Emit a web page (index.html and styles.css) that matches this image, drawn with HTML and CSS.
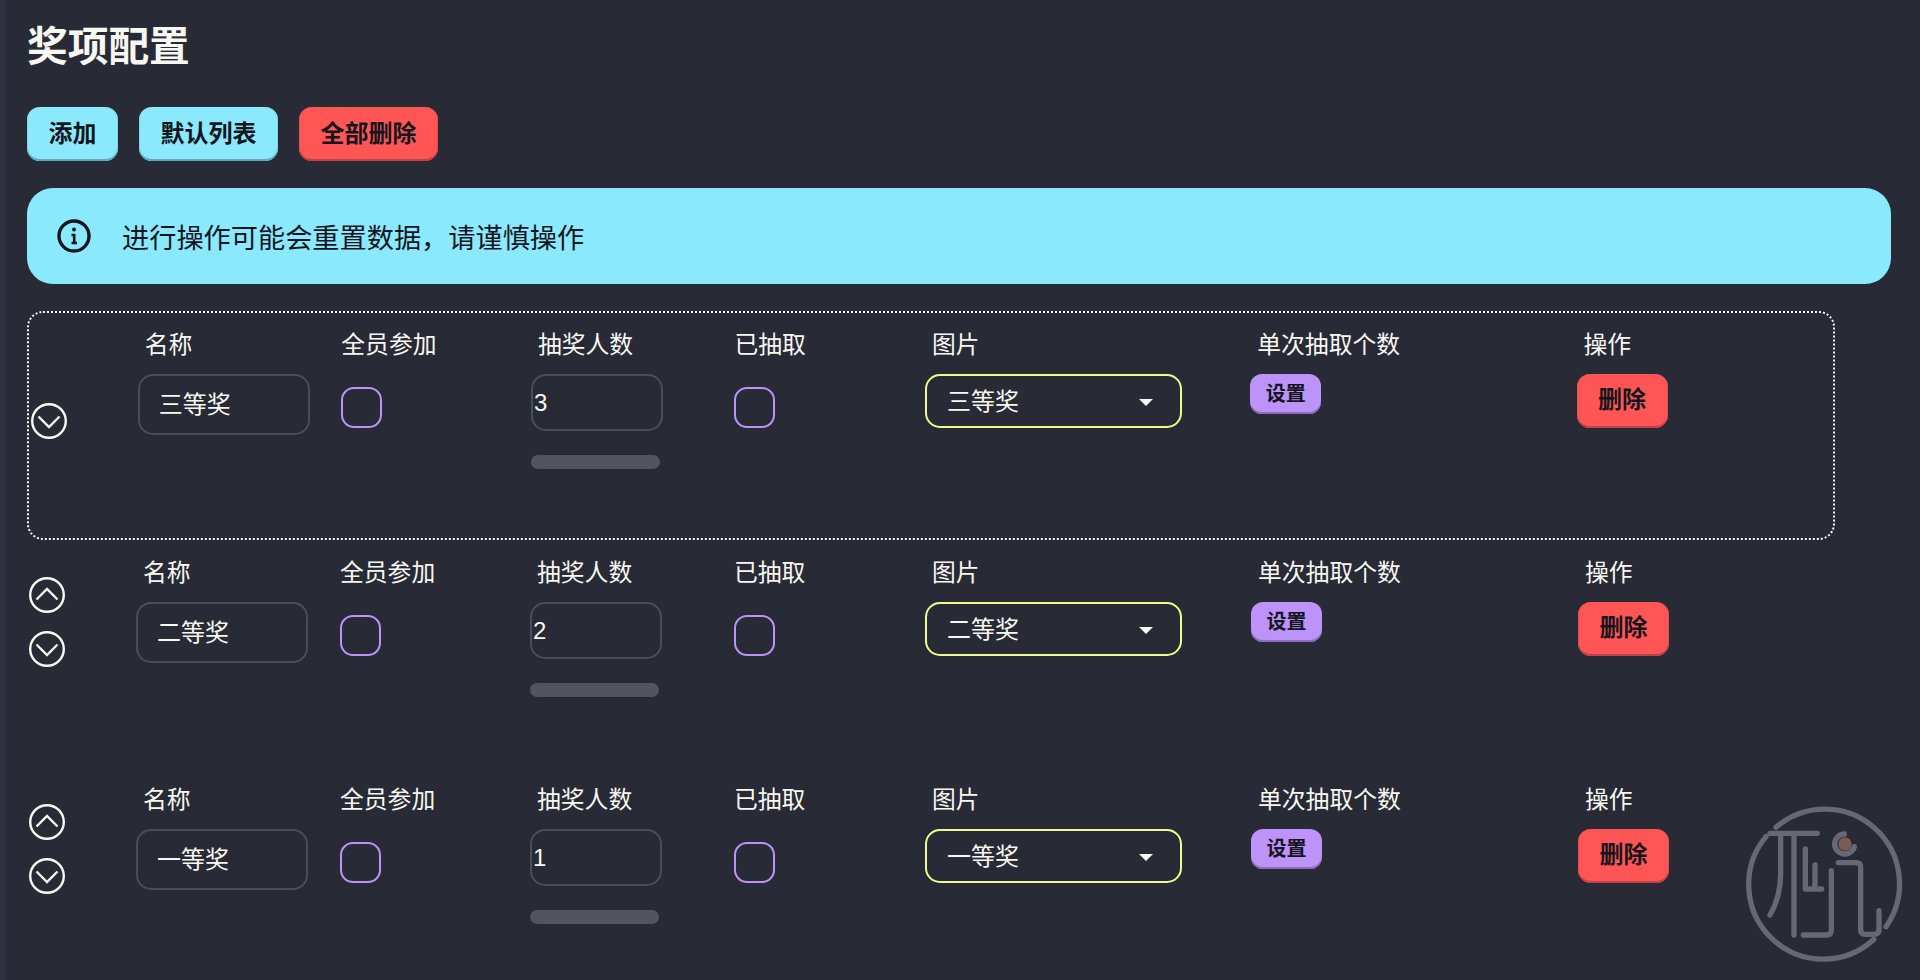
FILE: index.html

```html
<!DOCTYPE html>
<html lang="zh-CN">
<head>
	<meta charset="utf-8">
	<title>奖项配置</title>
	<link rel="stylesheet" href="styles.css">
</head>
<body>
	<div class="page">
		<h1 class="title">奖项配置</h1>

		<div class="toolbar">
			<button class="btn btn-cyan">添加</button>
			<button class="btn btn-cyan">默认列表</button>
			<button class="btn btn-red">全部删除</button>
		</div>

		<div class="alert">
			<svg class="alert-icon" viewBox="0 0 34 34" fill="none" stroke="#14161e" stroke-width="3.4">
				<circle cx="17" cy="17" r="15"/>
				<path d="M14.5 16H17.2V23.5M14.5 24H20" stroke-width="2.6"/>
				<circle cx="17" cy="10.5" r="2" fill="#14161e" stroke="none"/>
			</svg>
			<span>进行操作可能会重置数据，请谨慎操作</span>
		</div>

		<div class="prize-list">
			<!-- first row is the one being dragged/selected -->
			<div class="prize-row prize-row-active">
				<div class="move-col">
					<button class="move-btn move-hidden"></button>
					<button class="move-btn">
						<svg viewBox="0 0 36 36" fill="none" stroke="#f8f8f2" stroke-width="2.4"><circle cx="18" cy="18" r="16.8"/><path d="M7.5 13.5L18 24L28.5 13.5"/></svg>
					</button>
				</div>
				<div class="cell">
					<label class="cell-label">名称</label>
					<input class="text-input name-input" type="text" value="三等奖">
				</div>
				<div class="cell">
					<label class="cell-label">全员参加</label>
					<span class="check"></span>
				</div>
				<div class="cell">
					<label class="cell-label">抽奖人数</label>
					<input class="text-input num-input" type="text" value="3">
					<div class="progress"></div>
				</div>
				<div class="cell">
					<label class="cell-label">已抽取</label>
					<span class="check"></span>
				</div>
				<div class="cell">
					<label class="cell-label">图片</label>
					<div class="select-box">
						<select class="select"><option>三等奖</option></select>
					</div>
				</div>
				<div class="cell">
					<label class="cell-label">单次抽取个数</label>
					<button class="btn btn-purple">设置</button>
				</div>
				<div class="cell">
					<label class="cell-label">操作</label>
					<button class="btn btn-red btn-del">删除</button>
				</div>
			</div>

			<div class="prize-row">
				<div class="move-col">
					<button class="move-btn">
						<svg viewBox="0 0 36 36" fill="none" stroke="#f8f8f2" stroke-width="2.4"><circle cx="18" cy="18" r="16.8"/><path d="M7.5 22.5L18 12L28.5 22.5"/></svg>
					</button>
					<button class="move-btn">
						<svg viewBox="0 0 36 36" fill="none" stroke="#f8f8f2" stroke-width="2.4"><circle cx="18" cy="18" r="16.8"/><path d="M7.5 13.5L18 24L28.5 13.5"/></svg>
					</button>
				</div>
				<div class="cell">
					<label class="cell-label">名称</label>
					<input class="text-input name-input" type="text" value="二等奖">
				</div>
				<div class="cell">
					<label class="cell-label">全员参加</label>
					<span class="check"></span>
				</div>
				<div class="cell">
					<label class="cell-label">抽奖人数</label>
					<input class="text-input num-input" type="text" value="2">
					<div class="progress"></div>
				</div>
				<div class="cell">
					<label class="cell-label">已抽取</label>
					<span class="check"></span>
				</div>
				<div class="cell">
					<label class="cell-label">图片</label>
					<div class="select-box">
						<select class="select"><option>二等奖</option></select>
					</div>
				</div>
				<div class="cell">
					<label class="cell-label">单次抽取个数</label>
					<button class="btn btn-purple">设置</button>
				</div>
				<div class="cell">
					<label class="cell-label">操作</label>
					<button class="btn btn-red btn-del">删除</button>
				</div>
			</div>

			<div class="prize-row">
				<div class="move-col">
					<button class="move-btn">
						<svg viewBox="0 0 36 36" fill="none" stroke="#f8f8f2" stroke-width="2.4"><circle cx="18" cy="18" r="16.8"/><path d="M7.5 22.5L18 12L28.5 22.5"/></svg>
					</button>
					<button class="move-btn">
						<svg viewBox="0 0 36 36" fill="none" stroke="#f8f8f2" stroke-width="2.4"><circle cx="18" cy="18" r="16.8"/><path d="M7.5 13.5L18 24L28.5 13.5"/></svg>
					</button>
				</div>
				<div class="cell">
					<label class="cell-label">名称</label>
					<input class="text-input name-input" type="text" value="一等奖">
				</div>
				<div class="cell">
					<label class="cell-label">全员参加</label>
					<span class="check"></span>
				</div>
				<div class="cell">
					<label class="cell-label">抽奖人数</label>
					<input class="text-input num-input" type="text" value="1">
					<div class="progress"></div>
				</div>
				<div class="cell">
					<label class="cell-label">已抽取</label>
					<span class="check"></span>
				</div>
				<div class="cell">
					<label class="cell-label">图片</label>
					<div class="select-box">
						<select class="select"><option>一等奖</option></select>
					</div>
				</div>
				<div class="cell">
					<label class="cell-label">单次抽取个数</label>
					<button class="btn btn-purple">设置</button>
				</div>
				<div class="cell">
					<label class="cell-label">操作</label>
					<button class="btn btn-red btn-del">删除</button>
				</div>
			</div>
		</div>
	</div>

	<!-- watermark logo, bottom right -->
	<svg class="logo" viewBox="0 0 660 600" fill="none" stroke="#666874" stroke-width="16" stroke-linecap="round" stroke-linejoin="round">
		<path d="M228 142A224 224 0 0 1 558 440"/>
		<path d="M522 478A224 224 0 0 1 198 170"/>
		<path d="M210 160H352"/>
		<path d="M242 172V280C242 330 228 375 210 405"/>
		<path d="M282 172V465"/>
		<path d="M316 207V327H365"/>
		<path d="M345 255V325"/>
		<path d="M394 272V450Q394 465 380 465H310"/>
		<path d="M415 248H468Q482 248 482 262V450Q482 463 496 463H522Q537 463 537 450V392"/>
		<path d="M433 162A30 30 0 1 0 463 200"/>
		<circle cx="435" cy="192" r="20" fill="#7a5c50" stroke="none"/>
	</svg>
</body>
</html>
```

FILE: styles.css

```css
html, body {
	height: 100%;
	margin: 0;
	overflow: hidden;
	background: #282a36;
}

body {
	color: #f8f8f2;
	font-family: "Liberation Sans", "Noto Sans CJK SC", sans-serif;
	font-size: 24px;
}

.page {
	box-sizing: border-box;
	height: 100%;
	padding: 23px 29px 0 21px;
	border-left: 6px solid #2f3140;
}

.title {
	margin: 0 0 36px;
	font-size: 40.7px;
	line-height: 48px;
	font-weight: 700;
}

.toolbar {
	display: flex;
	gap: 21px;
	margin-bottom: 27px;
}

.btn {
	box-sizing: border-box;
	height: 54px;
	padding: 0 21.5px 5px;
	border: 0;
	border-radius: 13px;
	font-family: inherit;
	font-size: 24px;
	font-weight: 700;
	color: #14161e;
	cursor: pointer;
}

.btn-cyan {
	background: #8be9fd;
	box-shadow: inset 0 -2px 0 #5fa9bb, inset 1px 0 0 #7fd5e8, inset -1px 0 0 #7fd5e8;
}

.btn-red {
	background: #ff5555;
	box-shadow: inset 0 -2px 0 #c04146, inset 1px 0 0 #e84e50, inset -1px 0 0 #e84e50;
}

.btn-purple {
	width: 71px;
	height: 40px;
	padding: 0 0 3px;
	border-radius: 12px;
	font-size: 20px;
	background: #bd93f9;
	box-shadow: inset 0 -2px 0 #8d6dbb;
}

.btn-del {
	width: 91px;
	padding: 0 0 7px;
}

.alert {
	display: flex;
	align-items: center;
	gap: 31px;
	height: 96px;
	padding-left: 30px;
	margin-bottom: 27px;
	border-radius: 26px;
	background: #8be9fd;
	color: #14161e;
	font-size: 27.2px;
}

.alert-icon {
	width: 34px;
	height: 34px;
	flex: none;
}

.prize-list {
	width: 1808px;
}

.prize-row {
	box-sizing: border-box;
	display: grid;
	grid-template-columns: 109fr 197fr 197fr 197fr 198fr 326fr 327fr 257fr;
	height: 227px;
}

.prize-row-active {
	height: 229px;
	margin-bottom: 1px;
	border: 2px dotted #f8f8f2;
	border-radius: 16px;
}

.move-col {
	display: flex;
	flex-direction: column;
	gap: 18px;
	padding: 36px 0 0 2px;
}

.move-btn {
	display: block;
	width: 36px;
	height: 36px;
	padding: 0;
	border: 0;
	background: none;
	cursor: pointer;
}

.move-btn svg {
	display: block;
	width: 36px;
	height: 36px;
}

.move-hidden {
	visibility: hidden;
}

.cell {
	display: flex;
	flex-direction: column;
	align-items: flex-start;
	padding-top: 15px;
	min-width: 0;
}

.cell-label {
	display: block;
	margin-bottom: 12px;
	padding-left: 7px;
	font-size: 23.8px;
	line-height: 34px;
}

.text-input {
	display: block;
	box-sizing: border-box;
	border: 2px solid #4b4d5a;
	border-radius: 15px;
	background: transparent;
	color: #f8f8f2;
	font-family: inherit;
	font-size: 24px;
	outline: none;
}

.name-input {
	width: 172px;
	height: 61px;
	padding: 0 0 5px 19px;
}

.num-input {
	width: 132px;
	height: 57px;
	padding: 0 0 0 1px;
}

.check {
	display: block;
	box-sizing: border-box;
	width: 41px;
	height: 41px;
	margin: 13px 0 0 7px;
	border: 2px solid #bd93f9;
	border-radius: 13px;
}

.progress {
	width: 129px;
	height: 14px;
	margin-top: 24px;
	border-radius: 7px;
	background: #52545f;
}

.select-box {
	position: relative;
	width: 257px;
}

.select-box::after {
	content: "";
	position: absolute;
	top: 25px;
	right: 29px;
	border-style: solid;
	border-width: 7px 7px 0;
	border-color: #f8f8f2 transparent transparent;
	pointer-events: none;
}

.select {
	display: block;
	box-sizing: border-box;
	width: 100%;
	height: 54px;
	padding: 0 0 0 20px;
	border: 2px solid #f1fa8c;
	border-radius: 15px;
	background: transparent;
	color: #f8f8f2;
	font-family: inherit;
	font-size: 24px;
	appearance: none;
	outline: none;
}

.logo {
	position: fixed;
	right: 0;
	bottom: 0;
	width: 220px;
	height: 200px;
}
```
